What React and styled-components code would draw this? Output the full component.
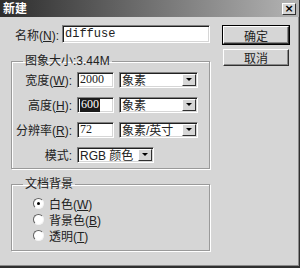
import React from 'react'
import styled, { createGlobalStyle } from 'styled-components'

const Global = createGlobalStyle`
  html, body { margin: 0; padding: 0; background: #d6d6d6; }
  * { box-sizing: border-box; }
`

const FONT = `"Liberation Sans", "Noto Sans CJK SC", sans-serif`

const Window = styled.div`
  width: 300px;
  height: 268px;
  background: #d6d6d6;
  border-right: 1px solid #303030;
  border-bottom: 2px solid #303030;
  box-shadow: inset -1px -1px 0 #8a8a8a;
  font-family: ${FONT};
  font-size: 12px;
  color: #222;
  display: flex;
  flex-direction: column;
`

const TitleBar = styled.div`
  height: 17px;
  background: linear-gradient(90deg, #2c2c2c 0%, #6a6a6a 45%, #b4b4b4 100%);
  display: flex;
  align-items: center;
  justify-content: space-between;
  padding: 0 3px 0 3px;
  color: #fff;
  font-weight: bold;
  font-size: 12px;
  line-height: 1;
`

const CloseBtn = styled.div`
  width: 14px;
  height: 12px;
  background: #d6d6d6;
  border: 1px solid;
  border-color: #fff #303030 #303030 #fff;
  color: #000;
  font-family: "DejaVu Sans", sans-serif;
  font-size: 11px;
  font-weight: bold;
  display: flex;
  align-items: center;
  justify-content: center;
  line-height: 1;
`

const Body = styled.div`
  display: flex;
  padding: 8px 0 0 11px;
  gap: 11px;
`

const LeftCol = styled.div`
  width: 199px;
  display: flex;
  flex-direction: column;
`

const RightCol = styled.div`
  display: flex;
  flex-direction: column;
  gap: 5px;
  padding-top: 1px;
  margin-left: 2px;
`

const NameRow = styled.div`
  display: flex;
  align-items: center;
  gap: 3px;
  padding-left: 4px;
`

const Label = styled.span`
  white-space: nowrap;
  text-align: ${p => (p.$right ? 'right' : 'left')};
`

const Key = styled.u`
  text-decoration: underline;
`

const Sunken = styled.div`
  width: ${p => p.$w}px;
  height: ${p => p.$h || 16}px;
  background: #fff;
  border-top: 1px solid #808080;
  border-left: 1px solid #808080;
  border-right: 1px solid #fff;
  border-bottom: 1px solid #fff;
  box-shadow: inset 1px 1px 0 #202020, inset -1px -1px 0 #d6d6d6;
  display: flex;
  align-items: center;
  padding-left: 2px;
  font-family: ${p => (p.$mono ? '"Liberation Mono", monospace' : '"Liberation Serif", serif')};
  font-size: 12px;
  overflow: hidden;
`

const Selected = styled.span`
  background: #1a1a1a;
  color: #fff;
  padding: 0 1px;
`

const Button = styled.div`
  width: 66px;
  height: ${p => (p.$default ? 18 : 17)}px;
  background: #d6d6d6;
  border: 1px solid;
  border-color: #fff #303030 #303030 #fff;
  box-shadow: inset -1px -1px 0 #8a8a8a;
  outline: ${p => (p.$default ? '1px solid #000' : 'none')};
  display: flex;
  align-items: center;
  justify-content: center;
  font-size: 12px;
`

const Group = styled.fieldset`
  margin: ${p => p.$top || 0}px 0 0 0;
  padding: 0;
  border: 1px solid #9a9a9a;
  box-shadow: 1px 1px 0 #fff, inset 1px 1px 0 #fff;
  min-width: 0;
  height: ${p => (p.$h ? p.$h + 'px' : 'auto')};
`

const Legend = styled.legend`
  padding: 0 2px;
  margin-left: 11px;
  font-size: 12px;
  line-height: 14px;
`

const Grid = styled.div`
  display: grid;
  grid-template-columns: 60px 37px 79px;
  column-gap: 5px;
  row-gap: 8px;
  padding: 3px 0 0 0;
  align-items: center;
`

const Select = styled(Sunken)`
  justify-content: space-between;
  padding-right: 1px;
  font-family: ${FONT};
`

const Arrow = styled.div`
  width: 14px;
  height: 12px;
  background: #d6d6d6;
  border: 1px solid;
  border-color: #fff #303030 #303030 #fff;
  display: flex;
  align-items: center;
  justify-content: center;
  &::after {
    content: '';
    border-left: 3px solid transparent;
    border-right: 3px solid transparent;
    border-top: 3px solid #000;
  }
`

const ModeCell = styled.div`
  grid-column: 2 / span 2;
`

const Radios = styled.div`
  display: flex;
  flex-direction: column;
  padding: 4px 0 0 21px;
`

const RadioRow = styled.div`
  display: flex;
  align-items: center;
  gap: 5px;
  height: 16px;
`

const RadioDot = styled.span`
  width: 11px;
  height: 11px;
  border-radius: 50%;
  background: #fff;
  border: 1px solid;
  border-color: #606060 #f4f4f4 #f4f4f4 #606060;
  display: flex;
  align-items: center;
  justify-content: center;
  &::after {
    content: '';
    width: 3px;
    height: 3px;
    border-radius: 50%;
    background: ${p => (p.$on ? '#000' : 'transparent')};
  }
`

function DropDown({ w, value }) {
  return (
    <Select $w={w}>
      <span>{value}</span>
      <Arrow />
    </Select>
  )
}

function Radio({ on, text, k }) {
  return (
    <RadioRow>
      <RadioDot $on={on} />
      <Label>{text}(<Key>{k}</Key>)</Label>
    </RadioRow>
  )
}

export default function App() {
  return (
    <>
      <Global />
      <Window>
        <TitleBar>
          <span>新建</span>
          <CloseBtn>×</CloseBtn>
        </TitleBar>
        <Body>
          <LeftCol>
            <NameRow>
              <Label>名称(<Key>N</Key>):</Label>
              <Sunken $w={156} $h={18} $mono>diffuse</Sunken>
            </NameRow>
            <Group $top={11} $h={115}>
              <Legend>图象大小:3.44M</Legend>
              <Grid>
                <Label $right>宽度(<Key>W</Key>):</Label>
                <Sunken $w={37}>2000</Sunken>
                <DropDown w={79} value="象素" />
                <Label $right>高度(<Key>H</Key>):</Label>
                <Sunken $w={37}><Selected>600</Selected></Sunken>
                <DropDown w={79} value="象素" />
                <Label $right>分辨率(<Key>R</Key>):</Label>
                <Sunken $w={37}>72</Sunken>
                <DropDown w={79} value="象素/英寸" />
                <Label $right>模式:</Label>
                <ModeCell>
                  <DropDown w={77} value="RGB 颜色" />
                </ModeCell>
              </Grid>
            </Group>
            <Group $top={8} $h={74}>
              <Legend>文档背景</Legend>
              <Radios>
                <Radio on text="白色" k="W" />
                <Radio text="背景色" k="B" />
                <Radio text="透明" k="T" />
              </Radios>
            </Group>
          </LeftCol>
          <RightCol>
            <Button $default>确定</Button>
            <Button>取消</Button>
          </RightCol>
        </Body>
      </Window>
    </>
  )
}
